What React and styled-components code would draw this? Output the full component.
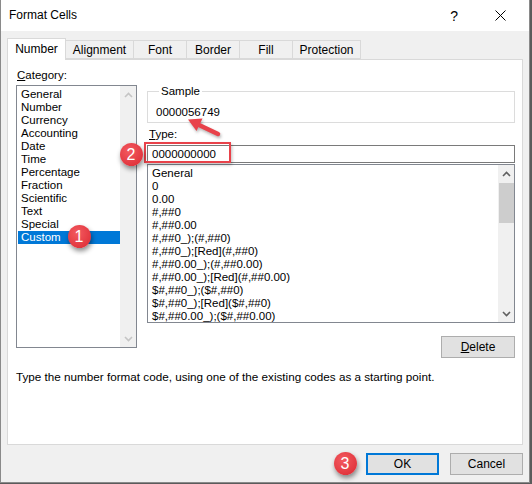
import React from 'react';
import styled, { createGlobalStyle } from 'styled-components';

const GlobalStyle = createGlobalStyle`
  html, body {
    margin: 0;
    padding: 0;
    background: #5b5b5b;
  }
  body {
    font-family: "Liberation Sans", Arial, sans-serif;
    font-size: 11.5px;
    color: #000;
  }
`;

const tabs = ['Number', 'Alignment', 'Font', 'Border', 'Fill', 'Protection'];
const tabWidths = [59, 69, 54, 54, 54, 69];

const categories = [
  'General', 'Number', 'Currency', 'Accounting', 'Date', 'Time',
  'Percentage', 'Fraction', 'Scientific', 'Text', 'Special', 'Custom'
];

const formats = [
  'General', '0', '0.00', '#,##0', '#,##0.00', '#,##0_);(#,##0)',
  '#,##0_);[Red](#,##0)', '#,##0.00_);(#,##0.00)', '#,##0.00_);[Red](#,##0.00)',
  '$#,##0_);($#,##0)', '$#,##0_);[Red]($#,##0)', '$#,##0.00_);($#,##0.00)'
];

const Chevron = ({ up, color }) => (
  <svg width="9" height="6" viewBox="0 0 9 6">
    <path
      d={up ? 'M1 5 L4.5 1.5 L8 5' : 'M1 1 L4.5 4.5 L8 1'}
      fill="none"
      stroke={color}
      strokeWidth="1.6"
    />
  </svg>
);

function App() {
  return (
    <>
      <GlobalStyle />
      <Window>
        <TitleBar>
          <Title>Format Cells</Title>
          <TitleButtons>
            <Help>?</Help>
            <svg width="11" height="11" viewBox="0 0 11 11">
              <path d="M0.5 0.5 L10.5 10.5 M10.5 0.5 L0.5 10.5" stroke="#000" strokeWidth="1" />
            </svg>
          </TitleButtons>
        </TitleBar>

        <Body>
          <TabRow>
            {tabs.map((t, i) => (
              <Tab key={t} $active={i === 0} $w={tabWidths[i]}>{t}</Tab>
            ))}
          </TabRow>

          <Panel>
            <Columns>
              <LeftCol>
                <Label><u>C</u>ategory:</Label>
                <ListBox $h={263}>
                  <Items $pl={1} $pt={2}>
                    {categories.map((c) => (
                      <Item key={c} $selected={c === 'Custom'} $pl={3}>{c}</Item>
                    ))}
                  </Items>
                  <ScrollBar>
                    <Arrow><Chevron up color="#c5c5c5" /></Arrow>
                    <Track />
                    <Arrow><Chevron color="#c5c5c5" /></Arrow>
                  </ScrollBar>
                </ListBox>
              </LeftCol>

              <RightCol>
                <Group>
                  <Legend>Sample</Legend>
                  <SampleValue>0000056749</SampleValue>
                </Group>
                <TypeLabel><u>T</u>ype:</TypeLabel>
                <TypeInput>0000000000</TypeInput>
                <ListBox $h={159}>
                  <Items $pl={0} $pt={2}>
                    {formats.map((f) => (
                      <Item key={f} $pl={4}>{f}</Item>
                    ))}
                  </Items>
                  <ScrollBar>
                    <Arrow><Chevron up color="#606060" /></Arrow>
                    <Track>
                      <Thumb />
                    </Track>
                    <Arrow><Chevron color="#606060" /></Arrow>
                  </ScrollBar>
                </ListBox>
                <DeleteRow>
                  <Button $w={74}><u>D</u>elete</Button>
                </DeleteRow>
              </RightCol>
            </Columns>
            <Description>
              Type the number format code, using one of the existing codes as a starting point.
            </Description>
          </Panel>

          <Footer>
            <Button $w={73} $default>OK</Button>
            <Button $w={73}>Cancel</Button>
          </Footer>
        </Body>

        <Highlight />
        <PointerArrow width="50" height="34" viewBox="180 110 50 34">
          <line x1="217" y1="134" x2="198" y2="125" stroke="#e8424a" strokeWidth="4.5" strokeLinecap="round" />
          <polygon points="187,119.5 201.5,118.5 195.5,131" fill="#e8424a" />
        </PointerArrow>
        <Badge style={{ left: 78, top: 236 }}>1</Badge>
        <Badge style={{ left: 130, top: 154 }}>2</Badge>
        <Badge style={{ left: 344, top: 463 }}>3</Badge>
      </Window>
    </>
  );
}

const Window = styled.div`
  position: relative;
  width: 530px;
  height: 483px;
  box-sizing: border-box;
  background: #f0f0f0;
  border-left: 1px solid #8a8a8a;
  border-right: 1px solid #8a8a8a;
  border-bottom: 1px solid #8a8a8a;
  overflow: hidden;
`;

const TitleBar = styled.div`
  height: 31px;
  background: #fff;
  display: flex;
  align-items: center;
  justify-content: space-between;
  padding: 0 23px 0 8px;
`;

const Title = styled.div`
  font-size: 12px;
  margin-top: -1px;
`;

const TitleButtons = styled.div`
  display: flex;
  align-items: center;
  gap: 37px;
`;

const Help = styled.span`
  font-size: 14px;
`;

const Body = styled.div`
  padding: 7px 6px 0 6px;
`;

const TabRow = styled.div`
  display: flex;
  align-items: flex-end;
  height: 21px;
`;

const Tab = styled.div`
  position: relative;
  z-index: ${(p) => (p.$active ? 2 : 1)};
  box-sizing: border-box;
  width: ${(p) => p.$w}px;
  height: ${(p) => (p.$active ? 22 : 19)}px;
  margin-bottom: ${(p) => (p.$active ? -1 : 0)}px;
  margin-left: ${(p) => (p.$active ? 0 : -1)}px;
  display: flex;
  align-items: center;
  justify-content: center;
  padding-bottom: ${(p) => (p.$active ? 2 : 0)}px;
  border: 1px solid #d9d9d9;
  border-bottom: ${(p) => (p.$active ? 'none' : '1px solid #d9d9d9')};
  background: ${(p) => (p.$active ? '#fff' : '#f0f0f0')};
  font-size: 12px;
`;

const Panel = styled.div`
  box-sizing: border-box;
  width: 516px;
  height: 386px;
  background: #fff;
  border: 1px solid #d9d9d9;
  padding: 8px 0 0 8px;
`;

const Columns = styled.div`
  display: flex;
  gap: 10px;
`;

const LeftCol = styled.div`
  width: 121px;
  display: flex;
  flex-direction: column;
`;

const Label = styled.div`
  line-height: 14px;
  height: 14px;
  margin: 0 0 3px 1px;
`;

const ListBox = styled.div`
  box-sizing: border-box;
  height: ${(p) => p.$h}px;
  border: 1px solid #828790;
  display: flex;
  background: #fff;
`;

const Items = styled.div`
  flex: 1;
  padding: ${(p) => p.$pt}px 0 0 ${(p) => p.$pl}px;
  overflow: hidden;
`;

const Item = styled.div`
  height: 13px;
  line-height: 13px;
  padding-left: ${(p) => p.$pl}px;
  white-space: nowrap;
  background: ${(p) => (p.$selected ? '#0078d7' : 'transparent')};
  color: ${(p) => (p.$selected ? '#fff' : '#000')};
`;

const ScrollBar = styled.div`
  width: 16px;
  background: #f0f0f0;
  display: flex;
  flex-direction: column;
`;

const Arrow = styled.div`
  height: 17px;
  display: flex;
  align-items: center;
  justify-content: center;
`;

const Track = styled.div`
  flex: 1;
  display: flex;
  justify-content: center;
`;

const Thumb = styled.div`
  width: 15px;
  height: 40px;
  margin-top: 1px;
  background: #cdcdcd;
`;

const RightCol = styled.div`
  width: 368px;
  display: flex;
  flex-direction: column;
  padding-top: 16px;
`;

const Group = styled.fieldset`
  margin: 0;
  padding: 0 0 3px 8px;
  border: 1px solid #dcdcdc;
  min-width: 0;
`;

const Legend = styled.legend`
  line-height: 14px;
  padding: 0 2px;
  margin-left: 3px;
`;

const SampleValue = styled.div`
  line-height: 14px;
  margin-top: 7px;
`;

const TypeLabel = styled.div`
  line-height: 14px;
  margin: 4px 0 4px 2px;
`;

const TypeInput = styled.div`
  box-sizing: border-box;
  height: 18px;
  line-height: 16px;
  border: 1px solid #7a7a7a;
  padding-left: 4px;
  margin-bottom: 1px;
`;

const DeleteRow = styled.div`
  display: flex;
  justify-content: flex-end;
  margin-top: 13px;
`;

const Button = styled.div`
  box-sizing: border-box;
  width: ${(p) => p.$w}px;
  height: 22px;
  display: flex;
  align-items: center;
  justify-content: center;
  background: #e1e1e1;
  border: ${(p) => (p.$default ? '2px solid #0078d7' : '1px solid #adadad')};
  font-size: 12px;
`;

const Description = styled.div`
  line-height: 14px;
  margin-top: 12px;
  font-size: 11.7px;
`;

const Footer = styled.div`
  width: 516px;
  display: flex;
  justify-content: flex-end;
  gap: 11px;
  margin-top: 8px;
`;

const Highlight = styled.div`
  position: absolute;
  left: 143px;
  top: 142px;
  width: 87px;
  height: 21px;
  box-sizing: border-box;
  border: 2.5px solid #e8424a;
  box-shadow: 1px 2px 3px rgba(0, 0, 0, 0.25);
`;

const PointerArrow = styled.svg`
  position: absolute;
  left: 180px;
  top: 110px;
  filter: drop-shadow(1px 2px 1.5px rgba(0, 0, 0, 0.3));
`;

const Badge = styled.div`
  position: absolute;
  width: 23px;
  height: 23px;
  margin: -11.5px 0 0 -11.5px;
  border-radius: 50%;
  background: radial-gradient(circle at 40% 35%, #f35a60, #e2373f 70%, #cf2a32);
  box-shadow: 1px 3px 5px rgba(0, 0, 0, 0.45);
  color: #fff;
  font-size: 16px;
  line-height: 23px;
  text-align: center;
`;

export default App;
